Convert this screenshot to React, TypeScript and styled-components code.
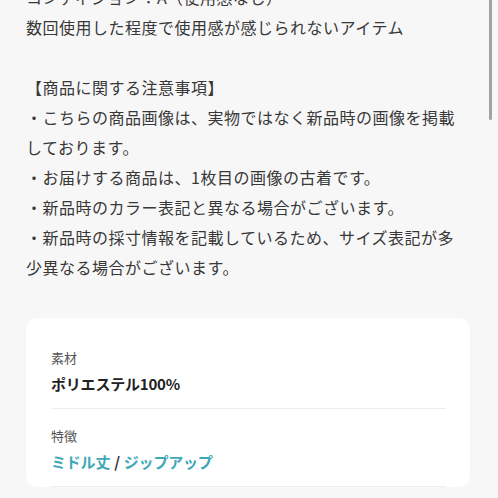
import * as React from 'react'
import styled, { createGlobalStyle } from 'styled-components'

const GlobalStyle = createGlobalStyle`
  html, body {
    margin: 0;
    padding: 0;
    background: #f7f7f7;
    overflow: hidden;
  }
  body {
    font-family: "Noto Sans CJK JP", "Noto Sans", sans-serif;
    color: #333;
  }
`

const Page = styled.div`
  width: 498px;
  height: 498px;
  overflow: hidden;
  position: relative;
`

const Description = styled.div`
  margin-top: -18px;
  padding: 0 26px;
  font-size: 16px;
  letter-spacing: 0.5px;
  line-height: 30px;
  color: #383838;
`

const Line = styled.div`
  min-height: 30px;
  white-space: nowrap;
`

const Card = styled.div`
  margin: 36px 28px 0 26px;
  background: #fff;
  border-radius: 12px;
  padding: 13px 24px 0 25px;
`

const Item = styled.div`
  padding: 18px 0 13px;
  border-bottom: 1px solid #eeeeee;
`

const Label = styled.div`
  font-size: 13px;
  line-height: 18px;
  color: #555;
  margin-bottom: 6px;
`

const Value = styled.div`
  font-size: 15px;
  line-height: 22px;
  font-weight: 700;
  letter-spacing: -0.2px;
  color: #222;
`

const Link = styled.span`
  color: #3ea8b8;
`

const Slash = styled.span`
  color: #333;
  margin: 0 4px;
`

const Scrollbar = styled.div`
  position: absolute;
  top: -4px;
  right: 6px;
  width: 3px;
  height: 124px;
  border-radius: 2px;
  background: #a3a3a3;
`

const lines = [
  'コンディション：A（使用感なし）',
  '数回使用した程度で使用感が感じられないアイテム',
  '',
  '【商品に関する注意事項】',
  '・こちらの商品画像は、実物ではなく新品時の画像を掲載',
  'しております。',
  '・お届けする商品は、1枚目の画像の古着です。',
  '・新品時のカラー表記と異なる場合がございます。',
  '・新品時の採寸情報を記載しているため、サイズ表記が多',
  '少異なる場合がございます。'
]

const App: React.FunctionComponent = () => {
  return (
    <Page>
      <GlobalStyle />
      <Description>
        {lines.map((line, index) => (
          <Line key={`line-${index}`}>{line}</Line>
        ))}
      </Description>
      <Card>
        <Item>
          <Label>素材</Label>
          <Value>ポリエステル100%</Value>
        </Item>
        <Item>
          <Label>特徴</Label>
          <Value>
            <Link>ミドル丈</Link>
            <Slash>/</Slash>
            <Link>ジップアップ</Link>
          </Value>
        </Item>
      </Card>
      <Scrollbar />
    </Page>
  )
}

export default App
